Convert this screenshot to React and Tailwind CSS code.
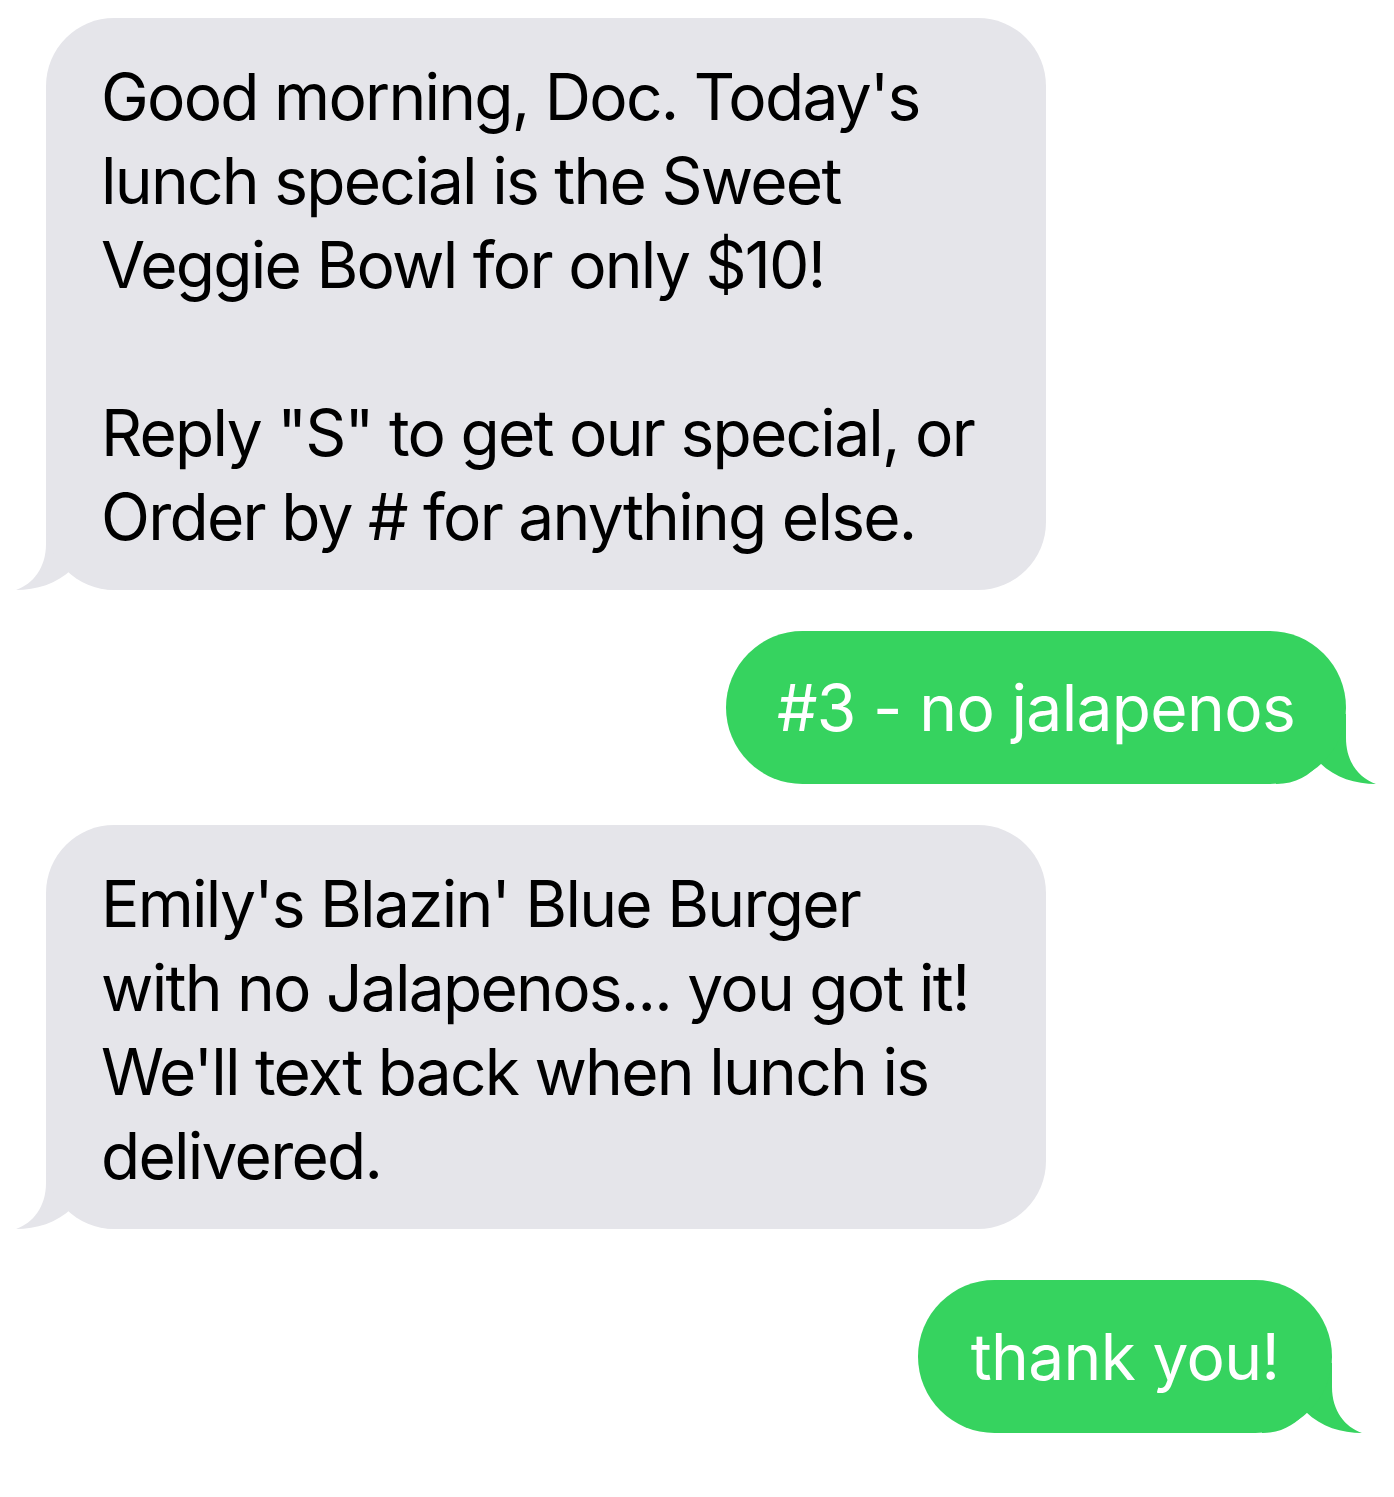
import React from "react";

const Tail = ({ color, side }) => {
  // tail curls out from the bubble's lower corner
  const pos =
    side === "left"
      ? "left-[-30px]"
      : "right-[-30px] scale-x-[-1]";
  return (
    <svg
      className={`absolute bottom-0 ${pos}`}
      width="100"
      height="70"
      viewBox="0 0 100 70"
    >
      <path
        d="M30,0 L30,24 C30,48 17,64 0,70 C20,70 41,64 56,49 C66,61 80,70 100,70 L100,0 Z"
        fill={color}
      />
    </svg>
  );
};

const Incoming = ({ children, className }) => (
  <div className={`relative ml-[46px] w-[1000px] ${className}`}>
    <div className="relative z-10 rounded-[68px] bg-[#e5e5ea] pl-[55px] pr-[40px] pt-[37px] pb-[31px] text-black">
      {children}
    </div>
    <Tail color="#e5e5ea" side="left" />
  </div>
);

const Outgoing = ({ children, className }) => (
  <div className={`relative ml-auto ${className}`}>
    <div className="relative z-10 flex h-[153px] items-center justify-center rounded-full bg-[#36d35f] tracking-[-0.01em] text-white">
      {children}
    </div>
    <Tail color="#36d35f" side="right" />
  </div>
);

const App = () => {
  return (
    <div
      className="min-h-[1497px] w-full bg-white pt-[18px] text-[64px] leading-[84px] tracking-[-0.027em]"
      style={{ fontFamily: "Inter, 'Liberation Sans', sans-serif" }}
    >
      <Incoming>
        <p className="whitespace-nowrap">
          Good morning, Doc. Today's
          <br />
          lunch special is the Sweet
          <br />
          Veggie Bowl for only $10!
          <br />
          <br />
          Reply "S" to get our special, or
          <br />
          Order by # for anything else.
        </p>
      </Incoming>

      <Outgoing className="mt-[41px] mr-[48px] w-[620px]">
        <span className="whitespace-nowrap">#3 - no jalapenos</span>
      </Outgoing>

      <Incoming className="mt-[41px]">
        <p className="whitespace-nowrap">
          Emily's Blazin' Blue Burger
          <br />
          with no Jalapenos... you got it!
          <br />
          We'll text back when lunch is
          <br />
          delivered.
        </p>
      </Incoming>

      <Outgoing className="mt-[51px] mr-[62px] w-[414px]">
        <span className="whitespace-nowrap">thank you!</span>
      </Outgoing>
    </div>
  );
};

export default App;
